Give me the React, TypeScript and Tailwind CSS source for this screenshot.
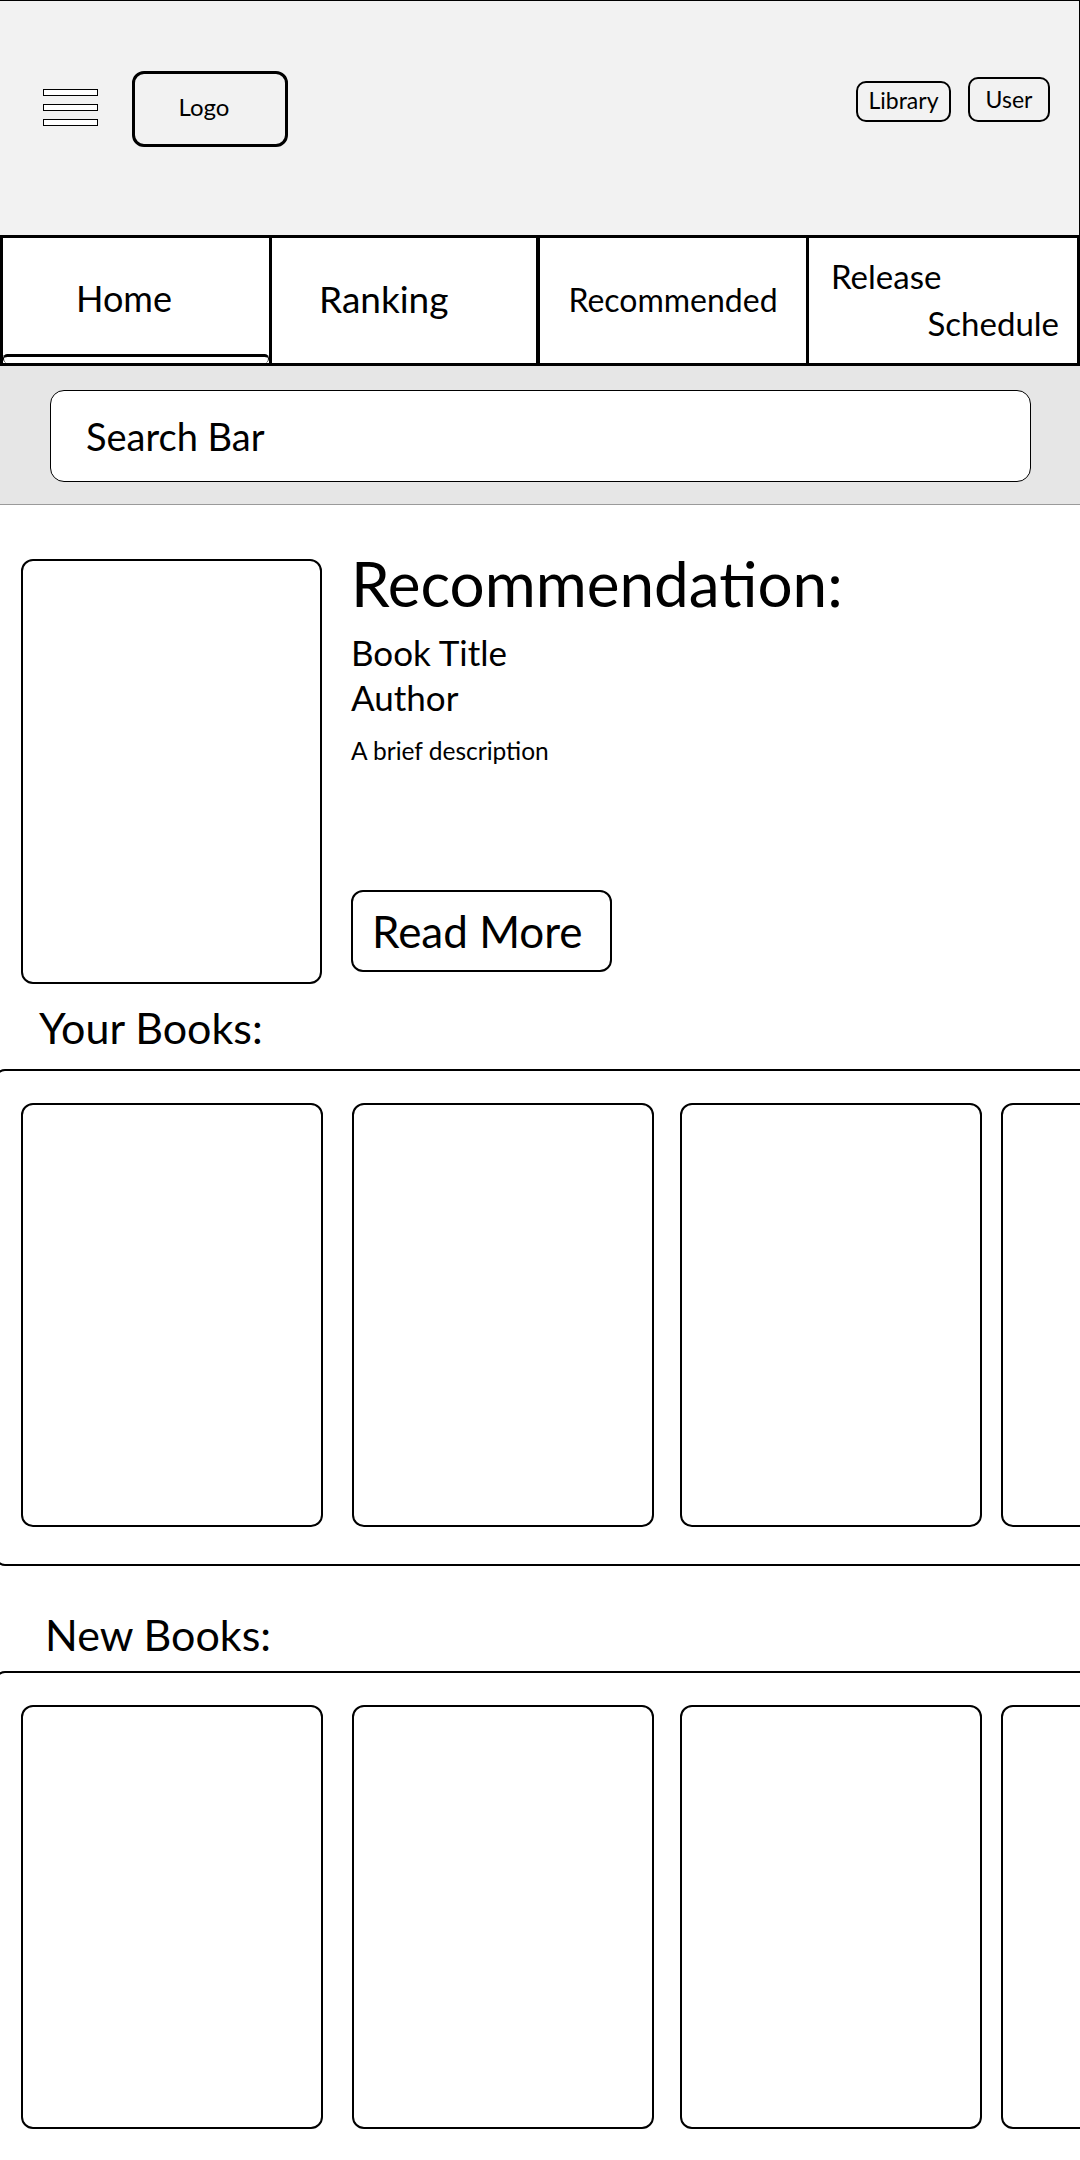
import React from "react"

// hand-drawn spacing, so every card keeps its own left offset
const shelfCards: string[] = ["ml-[24px]", "ml-[29px]", "ml-[26px]", "ml-[19px]"];

function Hamburger() {
    return (
        <div className="mt-[18px] flex w-[55px] flex-col gap-[8px]">
            <div className="h-[7px] border border-black bg-white" />
            <div className="h-[7px] border border-black bg-white" />
            <div className="h-[7px] border border-black bg-white" />
        </div>
    );
}

function Header() {
    return (
        <header className="flex h-[235px] items-start justify-between border-t border-r border-black bg-[#f2f2f2] pt-[70px] pl-[43px] pr-[29px]">
            <div className="flex items-start gap-[34px]">
                <Hamburger />
                <div className="flex h-[76px] w-[156px] items-center justify-center rounded-[12px] border-[3px] border-black pr-[12px] pb-[4px] text-[24px]">
                    Logo
                </div>
            </div>
            <div className="flex items-end gap-[17px] pt-[6px]">
                <button className="flex h-[41px] w-[95px] items-center justify-center rounded-[10px] border-2 border-black pb-[2px] text-[23px]">
                    Library
                </button>
                <button className="flex h-[45px] w-[82px] items-center justify-center rounded-[10px] border-2 border-black text-[23px]">
                    User
                </button>
            </div>
        </header>
    );
}

function Nav() {
    return (
        <nav className="flex h-[131px] border-[3px] border-black bg-white">
            <div className="flex w-[269px] flex-col border-r-[3px] border-black">
                <div className="flex flex-1 items-center pl-[73px] pt-[4px] text-[36px]">Home</div>
                <div className="h-[9px] rounded-full border-t-[3px] border-x border-black" />
            </div>
            <div className="flex w-[267px] items-center border-r-[3px] border-black pl-[47px] pb-[4px] text-[37px]">
                Ranking
            </div>
            <div className="flex w-[270px] items-center justify-center border-r-[3px] border-l border-black pb-[2px] text-[32px]">
                Recommended
            </div>
            <div className="flex flex-1 flex-col justify-center px-[18px] pb-[2px] text-[33px] leading-[47px]">
                <span className="pl-[4px]">Release</span>
                <span className="self-end">Schedule</span>
            </div>
        </nav>
    );
}

function SearchBand() {
    return (
        <div className="border-b border-[#9a9a9a] bg-[#e6e6e6] pt-[24px] pb-[22px] pl-[50px] pr-[49px]">
            <div className="flex h-[92px] items-center rounded-[14px] border border-black bg-white pl-[35px] text-[38px]">
                Search Bar
            </div>
        </div>
    );
}

function Recommendation() {
    return (
        <section className="mt-[54px] flex gap-[29px] px-[21px]">
            <div className="h-[425px] w-[301px] shrink-0 rounded-[12px] border-2 border-black" />
            <div className="flex flex-col items-start">
                <h1 className="text-[62px] leading-[48px]">Recommendation:</h1>
                <p className="mt-[23px] text-[35px] leading-[45px]">Book Title</p>
                <p className="text-[35px] leading-[45px]">Author</p>
                <p className="mt-[16px] text-[24.5px] leading-[30px]">A brief description</p>
                <button className="mt-[124px] flex h-[82px] w-[261px] items-center rounded-[12px] border-2 border-black pl-[19px] text-[44px]">
                    Read More
                </button>
            </div>
        </section>
    );
}

function Shelf({ title, labelClass, rowClass }: { title: string; labelClass: string; rowClass: string }) {
    return (
        <section>
            <h2 className={`${labelClass} text-[43px] leading-[52px]`}>{title}</h2>
            <div className={`${rowClass} -ml-[5px] flex w-[1200px] rounded-[10px] border-2 border-black pt-[32px] pb-[37px]`}>
                {shelfCards.map((ml, i) => (
                    <div key={i} className={`${ml} h-[424px] w-[302px] shrink-0 rounded-[12px] border-2 border-black`} />
                ))}
            </div>
        </section>
    );
}

export default function App() {
    return (
        <div className="h-[2160px] w-[1080px] overflow-hidden bg-white font-['Lato',sans-serif] text-black">
            <Header />
            <Nav />
            <SearchBand />
            <Recommendation />
            <Shelf title="Your Books:" labelClass="mt-[18px] pl-[39px]" rowClass="mt-[15px]" />
            <Shelf title="New Books:" labelClass="mt-[43px] pl-[45px]" rowClass="mt-[10px]" />
        </div>
    );
}
